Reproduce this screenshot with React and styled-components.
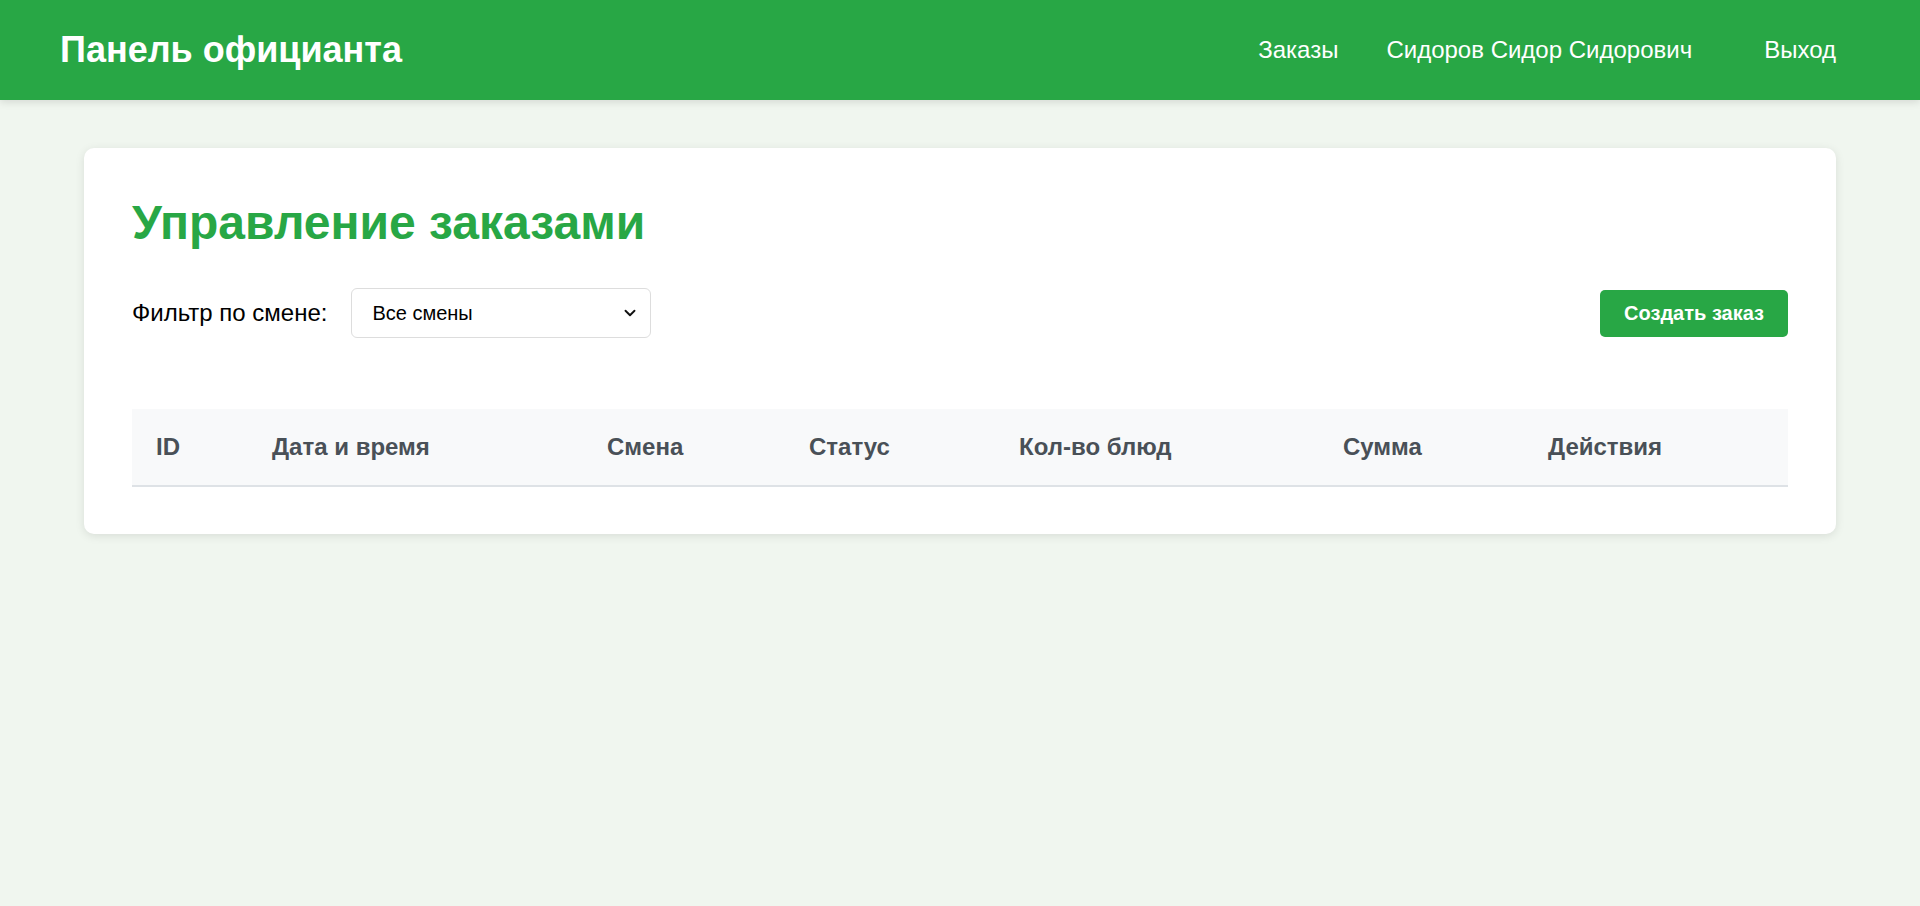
import styled, { createGlobalStyle } from "styled-components";
import { ChevronDown } from "lucide-react";

const GlobalStyle = createGlobalStyle`
  body {
    margin: 0;
    background: #f0f6ef;
    font-family: "Liberation Sans", Arial, sans-serif;
  }
`;

const Header = styled("header")`
  height: 100px;
  padding: 0 60px;
  display: flex;
  justify-content: space-between;
  align-items: center;
  background: #28a745;
  box-shadow: 0 2px 8px rgba(0, 0, 0, 0.12);

  .brand {
    margin: 0;
    color: #fff;
    font-size: 36px;
    font-weight: 700;
  }
`;

const Nav = styled("nav")`
  display: flex;
  align-items: center;
  gap: 48px;
`;

const NavLink = styled("a")`
  color: #fff;
  font-size: 24px;
  text-decoration: none;
`;

const LogoutButton = styled("button")`
  background: transparent;
  border: none;
  color: #fff;
  font-family: inherit;
  font-size: 24px;
  padding: 8px 24px;
  cursor: pointer;
`;

const Main = styled("main")`
  padding: 48px 84px;
`;

const Card = styled("section")`
  background: #fff;
  border-radius: 10px;
  padding: 47px 48px 47px;
  box-shadow: 0 2px 10px rgba(0, 0, 0, 0.1);

  .title {
    margin: 0 0 38px;
    color: #28a745;
    font-size: 48px;
    font-weight: 700;
  }
`;

const Toolbar = styled("div")`
  display: flex;
  justify-content: space-between;
  align-items: center;
`;

const FilterGroup = styled("div")`
  display: flex;
  align-items: center;
  gap: 24px;

  label {
    font-size: 24px;
    color: #000;
  }
`;

const SelectWrap = styled("div")`
  position: relative;
  width: 300px;

  svg {
    position: absolute;
    right: 12px;
    top: 50%;
    transform: translateY(-50%);
    pointer-events: none;
    color: #111;
  }
`;

const Select = styled("select")`
  width: 100%;
  height: 50px;
  padding: 0 40px 0 20px;
  border: 1px solid #ddd;
  border-radius: 6px;
  background: #fff;
  font-family: inherit;
  font-size: 20px;
  color: #000;
  appearance: none;
`;

const CreateButton = styled("button")`
  background: #28a745;
  color: #fff;
  border: none;
  border-radius: 5px;
  padding: 12px 24px;
  font-family: inherit;
  font-size: 20px;
  font-weight: 700;
  cursor: pointer;
`;

const Table = styled("table")`
  width: 100%;
  margin-top: 71px;
  border-collapse: collapse;
`;

const Th = styled("th")`
  width: ${(p) => p.$w}px;
  padding: 24px;
  text-align: left;
  background: #f8f9fa;
  color: #495057;
  font-size: 24px;
  font-weight: 700;
  border-bottom: 2px solid #dee2e6;
  white-space: nowrap;
`;

const columns = [
  { title: "ID", w: 116 },
  { title: "Дата и время", w: 335 },
  { title: "Смена", w: 202 },
  { title: "Статус", w: 210 },
  { title: "Кол-во блюд", w: 324 },
  { title: "Сумма", w: 205 },
  { title: "Действия", w: 264 },
];

const App = () => {
  return (
    <>
      <GlobalStyle />
      <Header>
        <h1 className="brand">Панель официанта</h1>
        <Nav>
          <NavLink href="#">Заказы</NavLink>
          <NavLink as="span">Сидоров Сидор Сидорович</NavLink>
          <LogoutButton>Выход</LogoutButton>
        </Nav>
      </Header>
      <Main>
        <Card>
          <h1 className="title">Управление заказами</h1>
          <Toolbar>
            <FilterGroup>
              <label htmlFor="shift">Фильтр по смене:</label>
              <SelectWrap>
                <Select id="shift" defaultValue="all">
                  <option value="all">Все смены</option>
                </Select>
                <ChevronDown size={18} strokeWidth={2.5} />
              </SelectWrap>
            </FilterGroup>
            <CreateButton>Создать заказ</CreateButton>
          </Toolbar>
          <Table>
            <thead>
              <tr>
                {columns.map((c) => (
                  <Th key={c.title} $w={c.w - 48}>
                    {c.title}
                  </Th>
                ))}
              </tr>
            </thead>
            <tbody />
          </Table>
        </Card>
      </Main>
    </>
  );
};

export default App;
